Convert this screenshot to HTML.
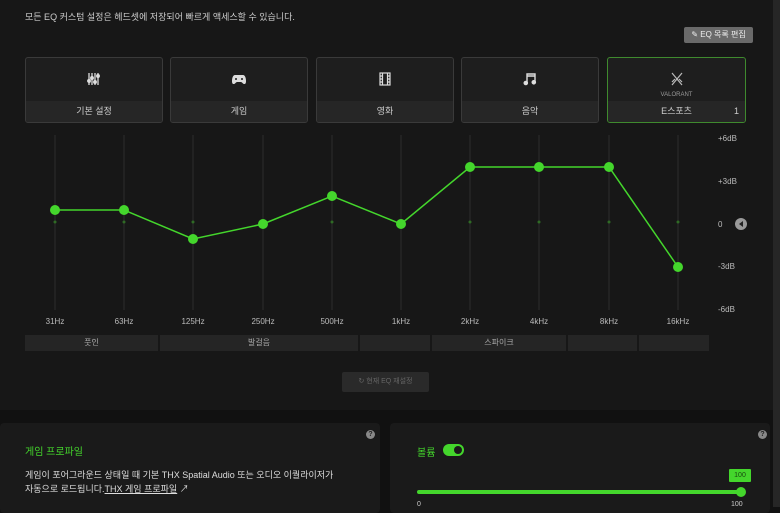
<!DOCTYPE html>
<html><head><meta charset="utf-8"><style>
*{margin:0;padding:0;box-sizing:border-box}
body{width:780px;height:507px;overflow:hidden;background:#111;font-family:"Liberation Sans","Noto Sans CJK KR",sans-serif;color:#ccc;position:relative}
.top{position:absolute;left:0;top:0;width:773px;height:410px;background:#171717}
.sb{position:absolute;left:773px;top:0;width:7px;height:507px;background:#262626}
.a{position:absolute}
.card{position:absolute;top:57px;height:66px;border:1px solid #3a3a3a;border-radius:3px;background:#1e1e1e;overflow:hidden}
.card .lb{position:absolute;left:0;right:0;bottom:0;height:21px;background:#262626;font-size:9px;color:#ccc;text-align:center;line-height:21px}
.card svg{position:absolute;left:50%;top:14px;transform:translateX(-50%)}
.seg{position:absolute;top:335px;height:16px;background:#252525;font-size:8px;color:#aaa;text-align:center;line-height:16px}
.hz{position:absolute;top:317px;font-size:8px;color:#bbb;width:40px;text-align:center}
.db{position:absolute;left:718px;font-size:8px;color:#bbb}
.panel{position:absolute;top:423px;height:90px;background:#1a1a1a;border-radius:4px}
.q{position:absolute;width:9px;height:9px;border-radius:50%;background:#888;color:#222;font-size:7px;font-weight:bold;text-align:center;line-height:9px}
</style></head><body>
<div class="top"></div>
<div class="sb"></div>
<div class="a" style="left:25px;top:10px;font-size:9px;color:#ccc">모든 EQ 커스텀 설정은 헤드셋에 저장되어 빠르게 액세스할 수 있습니다.</div>
<div class="a" style="left:684px;top:27px;width:69px;height:16px;background:#6a6a6a;border-radius:2px;font-size:8px;color:#eee;line-height:16px;text-align:center">✎ EQ 목록 편집</div>

<div class="card" style="left:25px;width:138px"><svg width="14" height="14" viewBox="0 0 14 14" fill="none" stroke="#ddd" stroke-width="1.3"><path d="M2 1v12M5 1v12M8 1v12M11 1v12"/><circle cx="2" cy="9" r="1.3" fill="#ddd"/><circle cx="5" cy="6" r="1.3" fill="#ddd"/><circle cx="8" cy="10" r="1.3" fill="#ddd"/><circle cx="11" cy="4" r="1.3" fill="#ddd"/></svg><div class="lb">기본 설정</div></div>
<div class="card" style="left:170px;width:138px"><svg width="14" height="14" viewBox="0 0 14 14"><path d="M3 3h8c2 0 3 3 3 6s-1 3-2 3-2-2-3-2H5c-1 0-2 2-3 2S0 12 0 9s1-6 3-6z" fill="#ddd"/><circle cx="4" cy="7" r="1" fill="#1e1e1e"/><circle cx="10" cy="7" r="1" fill="#1e1e1e"/></svg><div class="lb">게임</div></div>
<div class="card" style="left:316px;width:138px"><svg width="14" height="14" viewBox="0 0 14 14" fill="none" stroke="#ddd" stroke-width="1.2"><rect x="2" y="1" width="10" height="12"/><path d="M4.5 1v12M9.5 1v12M2 4h2.5M2 7h2.5M2 10h2.5M9.5 4H12M9.5 7H12M9.5 10H12"/></svg><div class="lb">영화</div></div>
<div class="card" style="left:461px;width:138px"><svg width="14" height="14" viewBox="0 0 14 14" fill="none" stroke="#ddd" stroke-width="1.4"><path d="M4 11V2h8v8"/><path d="M4 4h8"/><circle cx="2.8" cy="11" r="1.6" fill="#ddd"/><circle cx="10.8" cy="10.3" r="1.6" fill="#ddd"/></svg><div class="lb">음악</div></div>
<div class="card" style="left:607px;width:139px;border-color:#3f8a2e"><svg width="14" height="14" viewBox="0 0 14 14" fill="none" stroke="#bbb" stroke-width="1.2"><path d="M2 1l10 12M12 1L2 13M5 7l-3 3M9 7l3 3"/></svg><div class="a" style="left:0;right:0;top:34px;text-align:center;font-size:6px;color:#999">VALORANT</div><div class="lb">E스포츠<span style="position:absolute;right:6px">1</span></div></div>

<svg class="a" style="left:0;top:0" width="773" height="410">
<g stroke="#2c2c2c" stroke-width="1">
<path d="M55 135V310M124 135V310M193 135V310M263 135V310M332 135V310M401 135V310M470 135V310M539 135V310M609 135V310M678 135V310"/>
</g>
<g fill="#2f6a25"><circle cx="55" cy="222" r="1.5"/><circle cx="124" cy="222" r="1.5"/><circle cx="193" cy="222" r="1.5"/><circle cx="263" cy="222" r="1.5"/><circle cx="332" cy="222" r="1.5"/><circle cx="401" cy="222" r="1.5"/><circle cx="470" cy="222" r="1.5"/><circle cx="539" cy="222" r="1.5"/><circle cx="609" cy="222" r="1.5"/><circle cx="678" cy="222" r="1.5"/></g>
<polyline points="55,210 124,210 193,239 263,224 332,196 401,224 470,167 539,167 609,167 678,267" fill="none" stroke="#44d62c" stroke-width="1.5"/>
<g fill="#44d62c"><circle cx="55" cy="210" r="5"/><circle cx="124" cy="210" r="5"/><circle cx="193" cy="239" r="5"/><circle cx="263" cy="224" r="5"/><circle cx="332" cy="196" r="5"/><circle cx="401" cy="224" r="5"/><circle cx="470" cy="167" r="5"/><circle cx="539" cy="167" r="5"/><circle cx="609" cy="167" r="5"/><circle cx="678" cy="267" r="5"/></g>
<circle cx="741" cy="224" r="6" fill="#999"/><path d="M743 221v6l-4-3z" fill="#222"/>
</svg>
<div class="db" style="top:134px">+6dB</div>
<div class="db" style="top:177px">+3dB</div>
<div class="db" style="top:220px;left:718px">0</div>
<div class="db" style="top:262px">-3dB</div>
<div class="db" style="top:305px">-6dB</div>
<div class="hz" style="left:35px">31Hz</div><div class="hz" style="left:104px">63Hz</div><div class="hz" style="left:173px">125Hz</div><div class="hz" style="left:243px">250Hz</div><div class="hz" style="left:312px">500Hz</div><div class="hz" style="left:381px">1kHz</div><div class="hz" style="left:450px">2kHz</div><div class="hz" style="left:519px">4kHz</div><div class="hz" style="left:589px">8kHz</div><div class="hz" style="left:658px">16kHz</div>
<div class="seg" style="left:25px;width:133px">풋인</div>
<div class="seg" style="left:160px;width:198px">발걸음</div>
<div class="seg" style="left:360px;width:70px"></div>
<div class="seg" style="left:432px;width:134px">스파이크</div>
<div class="seg" style="left:568px;width:69px"></div>
<div class="seg" style="left:639px;width:70px"></div>
<div class="a" style="left:342px;top:372px;width:87px;height:20px;background:#2a2a2a;border-radius:2px;font-size:7px;color:#666;line-height:20px;text-align:center">↻ 현재 EQ 재설정</div>

<div class="panel" style="left:0;width:380px"></div>
<div class="panel" style="left:390px;width:380px"></div>
<div class="q" style="left:366px;top:430px">?</div>
<div class="q" style="left:758px;top:430px">?</div>
<div class="a" style="left:25px;top:443px;font-size:10px;color:#44d62c">게임 프로파일</div>
<div class="a" style="left:25px;top:468px;font-size:9px;color:#ddd;line-height:14px">게임이 포어그라운드 상태일 때 기본 THX Spatial Audio 또는 오디오 이퀄라이저가<br>자동으로 로드됩니다.<u>THX 게임 프로파일</u> ↗</div>
<div class="a" style="left:417px;top:444px;font-size:10px;color:#44d62c">볼륨</div>
<div class="a" style="left:443px;top:444px;width:21px;height:12px;border-radius:6px;background:#44d62c"><div class="a" style="right:2px;top:2px;width:8px;height:8px;border-radius:50%;background:#1a1a1a"></div></div>
<div class="a" style="left:729px;top:469px;width:22px;height:13px;background:#44d62c;color:#1a4a10;font-size:7px;line-height:13px;text-align:center;border-radius:1px">100</div>
<div class="a" style="left:417px;top:490px;width:325px;height:4px;background:#44d62c;border-radius:2px"></div>
<div class="a" style="left:736px;top:487px;width:10px;height:10px;border-radius:50%;background:#44d62c"></div>
<div class="a" style="left:417px;top:501px;font-size:7px;color:#ccc">0</div>
<div class="a" style="left:731px;top:501px;font-size:7px;color:#ccc">100</div>
</body></html>
